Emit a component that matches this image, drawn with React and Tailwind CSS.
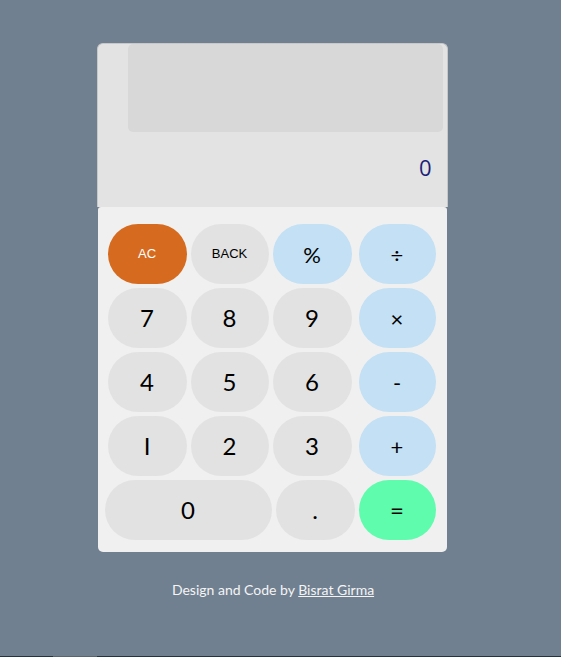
import React from "react";

const digit = "bg-[#e2e2e2] text-black text-[24px]";
const op = "bg-[#c3e0f4] text-black text-[22px]";

const rows = [
  [
    { label: "AC", cls: "bg-[#d66b1f] text-white text-[13px] font-['Liberation_Sans',sans-serif]", w: "w-[79px]" },
    { label: "BACK", cls: "bg-[#e2e2e2] text-black text-[13px] font-['Liberation_Sans',sans-serif]", w: "w-[78px]" },
    { label: "%", cls: op, w: "w-[79px]" },
    { label: "÷", cls: op, w: "w-[77px] ml-[3px]" },
  ],
  [
    { label: "7", cls: digit, w: "w-[79px]" },
    { label: "8", cls: digit, w: "w-[78px]" },
    { label: "9", cls: digit, w: "w-[79px]" },
    { label: "×", cls: op, w: "w-[77px] ml-[3px]" },
  ],
  [
    { label: "4", cls: digit, w: "w-[79px]" },
    { label: "5", cls: digit, w: "w-[78px]" },
    { label: "6", cls: digit, w: "w-[79px]" },
    { label: "-", cls: op, w: "w-[77px] ml-[3px]" },
  ],
  [
    { label: "I", cls: digit, w: "w-[79px]" },
    { label: "2", cls: digit, w: "w-[78px]" },
    { label: "3", cls: digit, w: "w-[79px]" },
    { label: "+", cls: op, w: "w-[77px] ml-[3px]" },
  ],
];

const App = () => {
  return (
    <div className="h-screen flex flex-col bg-[#708090] font-['Lato',sans-serif]">
      <div className="flex-1 flex flex-col items-center pt-[43px]">
        <div className="w-[351px] ml-[-17px] flex flex-col">
          {/* Display */}
          <div className="h-[164px] bg-[#e3e3e3] border border-[#c8c8c8] border-b-0 rounded-t-[6px] flex flex-col">
            <div className="ml-[30px] mr-[4px] h-[88px] bg-[#d8d8d8] rounded-[5px]"></div>
            <div className="flex-1 flex items-center justify-end pr-[15px] pb-[4px] text-[22px] text-[#1b1f7a] font-['Open_Sans',sans-serif]">
              0
            </div>
          </div>

          {/* Keypad */}
          <div className="bg-[#f0f0f0] h-[345px] ml-[1px] mr-[1px] rounded-b-[5px] rounded-t-[3px] pt-[17px]">
            <div className="flex flex-col gap-[4px]">
              {rows.map((row, i) => (
                <div key={i} className="flex gap-[4px] pl-[10px]">
                  {row.map((b) => (
                    <button
                      key={b.label}
                      className={`${b.w} ${b.cls} h-[60px] rounded-[30px] flex items-center justify-center`}
                    >
                      {b.label}
                    </button>
                  ))}
                </div>
              ))}
              <div className="flex gap-[4px] pl-[7px]">
                <button className={`w-[167px] h-[60px] rounded-[30px] flex items-center justify-center ${digit}`}>
                  0
                </button>
                <button className={`w-[79px] h-[60px] rounded-[30px] flex items-center justify-center ${digit}`}>
                  .
                </button>
                <button className="w-[77px] h-[60px] rounded-[30px] flex items-center justify-center bg-[#5ffcae] text-black text-[24px]">
                  =
                </button>
              </div>
            </div>
          </div>
        </div>

        {/* Footer */}
        <p className="mt-[27px] ml-[-15px] text-[14px] text-[#f4f4f4]">
          Design and Code by{" "}
          <a href="#" className="underline">
            Bisrat Girma
          </a>
        </p>
      </div>
      <div className="h-px flex">
        <div className="w-[53px] bg-[#22343f]"></div>
        <div className="w-[44px] bg-[#56656f]"></div>
        <div className="flex-1 bg-[#22343f]"></div>
      </div>
    </div>
  );
};

export default App;
